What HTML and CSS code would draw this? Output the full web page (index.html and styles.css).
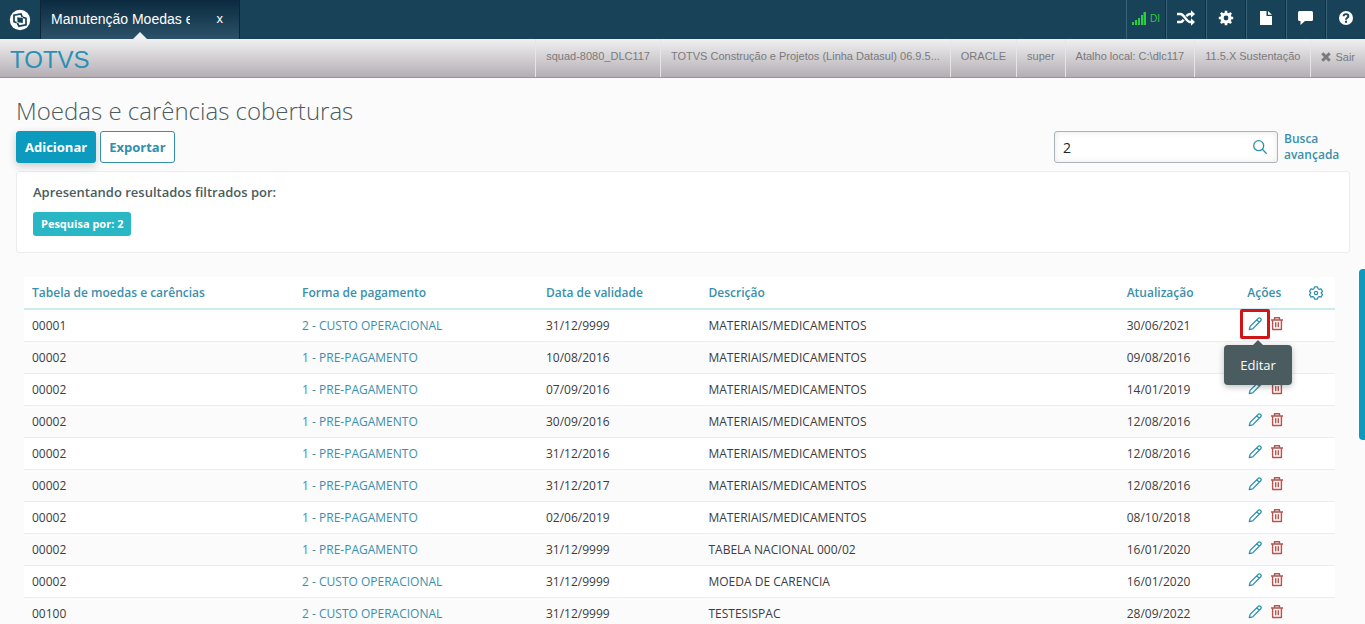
FILE: index.html
```html
<!DOCTYPE html>
<html lang="pt-BR">
<head>
<meta charset="utf-8">
<title>Moedas e carências coberturas</title>
<link rel="stylesheet" href="styles.css">
</head>
<body>
<svg class="sprite" aria-hidden="true">
  <symbol id="pencil" viewBox="0 0 16 16"><path d="M2.300 13.700l.8-3.300 8.300-8.100c.6-.6 1.400-.5 1.900 0l.5.5c.6.6.5 1.400 0 1.900l-8.200 8.200-3.300.8zM9.800 3.900l2.400 2.400" fill="none" stroke="currentColor" stroke-width="1.300" stroke-linejoin="round"/></symbol>
  <symbol id="trash" viewBox="0 0 16 16"><path d="M2 4h12M5.500 4V1.800h5V4M3.600 4v9.500h8.800V4M6.700 6.200v5M9.300 6.200v5" fill="none" stroke="currentColor" stroke-width="1.400" stroke-linejoin="round"/></symbol>
</svg>
<header class="topbar">
  <a class="logo" href="#" aria-label="Início"><svg width="22" height="22" viewBox="0 0 22 22"><circle cx="11" cy="11" r="10.200" fill="#fff"/><path d="M7.600 13.600L5 12.700V6.200l7-1.300 1.300 3.200" fill="none" stroke="#174257" stroke-width="1.700"/><path d="M13.800 8.400l3.200.9v6.500l-7 1.400-1.700-3.200" fill="none" stroke="#174257" stroke-width="1.700"/><path d="M8.200 8.200l5.600.8v5l-5.300-.8z" fill="#174257"/></svg></a>
  <div class="tab"><span class="tab-name">Manutenção Moedas e</span><button class="tab-close" aria-label="Fechar">x</button></div>
  <nav class="tools">
    <button class="tool signal" aria-label="Conexão DI"><svg width="14" height="14" viewBox="0 0 14 14"><path d="M0 11h2v3H0zM3 9h2v5H3zM6 7h2v7H6zM9 4h2v10H9zM11.500 1H14v13h-2.500z" fill="currentColor"/></svg><span>DI</span></button>
    <button class="tool" aria-label="Alternar"><svg width="18" height="16" viewBox="0 0 18 16"><path d="M0 4h3.500c3.500 0 6 8 9.500 8h2M0 12h3.500c1.300 0 2.300-1 3.200-2.300M9.300 6.200C10.300 4.900 11.500 4 13 4h2" fill="none" stroke="#fff" stroke-width="2.400"/><path d="M14 .3L18 4l-4 3.700zM14 8.300l4 3.700-4 3.700z" fill="#fff"/></svg></button>
    <button class="tool" aria-label="Configurações"><svg width="16" height="16" viewBox="0 0 16 16"><circle cx="8" cy="8" r="4" fill="none" stroke="#fff" stroke-width="3.200"/><path d="M8 .8v3M8 12.200v3M.8 8h3M12.200 8h3M2.900 2.900L5 5M11 11l2.100 2.100M2.900 13.100L5 11M11 5l2.100-2.100" stroke="#fff" stroke-width="2.600"/></svg></button>
    <button class="tool" aria-label="Documentos"><svg width="12" height="14" viewBox="0 0 12 14"><path d="M0 0h6.500v5H12v9H0zM8 0l4 3.800H8z" fill="#fff"/></svg></button>
    <button class="tool" aria-label="Mensagens"><svg width="16" height="14" viewBox="0 0 16 14"><path d="M1.500 0h12q1.500 0 1.500 1.500v7q0 1.500-1.500 1.500H7l-4.500 4V10h-1Q0 10 0 8.500v-7Q0 0 1.500 0z" fill="#fff"/></svg></button>
    <button class="tool" aria-label="Ajuda"><svg width="14" height="14" viewBox="0 0 14 14"><circle cx="7" cy="7" r="7" fill="#fff"/><path d="M4.600 5.200C4.700 2.400 9.500 2.500 9.400 5.100 9.300 6.800 7 6.600 7 8.700" fill="none" stroke="#174257" stroke-width="1.900"/><path d="M6 9.700h2v2H6z" fill="#174257"/></svg></button>
  </nav>
</header>
<div class="infobar">
  <strong class="brand">TOTVS</strong>
  <span class="info">squad-8080_DLC117</span>
  <span class="info">TOTVS Construção e Projetos (Linha Datasul) 06.9.5...</span>
  <span class="info">ORACLE</span>
  <span class="info">super</span>
  <span class="info">Atalho local: C:\dlc117</span>
  <span class="info">11.5.X Sustentação</span>
  <a class="info exit" href="#"><svg width="10" height="10" viewBox="0 0 10 10"><path d="M1.300 1.300l7.400 7.400M8.700 1.300L1.300 8.700" stroke="currentColor" stroke-width="3"/></svg>Sair</a>
</div>
<main class="page">
  <h1 class="title">Moedas e carências coberturas</h1>
  <div class="actions">
    <button class="btn primary">Adicionar</button>
    <button class="btn">Exportar</button>
    <form class="search">
      <div class="search-box"><input class="search-input" type="text" value="2" aria-label="Pesquisar"><button class="search-btn" type="button" aria-label="Buscar"><svg width="16" height="16" viewBox="0 0 16 16"><circle cx="6.700" cy="6.700" r="5" fill="none" stroke="currentColor" stroke-width="1.300"/><path d="M10.300 10.300l4.400 4.400" stroke="currentColor" stroke-width="1.300"/></svg></button></div>
      <a class="advanced" href="#">Busca avançada</a>
    </form>
  </div>
  <section class="filters">
    <h2 class="filters-title">Apresentando resultados filtrados por:</h2>
    <span class="tag">Pesquisa por: 2</span>
  </section>
  <table class="grid">
    <colgroup><col class="c-table"><col class="c-pay"><col class="c-date"><col class="c-desc"><col class="c-upd"><col class="c-act"><col class="c-cfg"></colgroup>
    <thead><tr><th>Tabela de moedas e carências</th><th>Forma de pagamento</th><th>Data de validade</th><th>Descrição</th><th>Atualização</th><th>Ações</th><th><button class="icon config" aria-label="Colunas"><svg width="14" height="14" viewBox="0 0 14 14"><path d="M5.500.8h3l.5 1.900 1.200.7 1.800-.5 1.500 2.500L12.200 7l1.300 1.600-1.500 2.500-1.800-.5-1.200.7-.5 1.900h-3L5 11.300l-1.200-.7-1.800.5L.5 8.600 1.800 7 .5 5.400 2 2.900l1.800.5L5 2.700z" fill="none" stroke="currentColor" stroke-width="1.200" stroke-linejoin="round"/><circle cx="7" cy="7" r="1.600" fill="none" stroke="currentColor" stroke-width="1.200"/></svg></button></th></tr></thead>
    <tbody>
      <tr><td>00001</td><td><a href="#">2 - CUSTO OPERACIONAL</a></td><td>31/12/9999</td><td>MATERIAIS/MEDICAMENTOS</td><td>30/06/2021</td><td><div class="row-actions"><button class="icon marked" aria-label="Editar" aria-describedby="tip"><svg width="16" height="16"><use href="#pencil"/></svg><span class="tip" id="tip" role="tooltip">Editar</span></button><button class="icon danger" aria-label="Excluir"><svg width="16" height="16"><use href="#trash"/></svg></button></div></td><td></td></tr>
      <tr><td>00002</td><td><a href="#">1 - PRE-PAGAMENTO</a></td><td>10/08/2016</td><td>MATERIAIS/MEDICAMENTOS</td><td>09/08/2016</td><td><div class="row-actions"><button class="icon" aria-label="Editar"><svg width="16" height="16"><use href="#pencil"/></svg></button><button class="icon danger" aria-label="Excluir"><svg width="16" height="16"><use href="#trash"/></svg></button></div></td><td></td></tr>
      <tr><td>00002</td><td><a href="#">1 - PRE-PAGAMENTO</a></td><td>07/09/2016</td><td>MATERIAIS/MEDICAMENTOS</td><td>14/01/2019</td><td><div class="row-actions"><button class="icon" aria-label="Editar"><svg width="16" height="16"><use href="#pencil"/></svg></button><button class="icon danger" aria-label="Excluir"><svg width="16" height="16"><use href="#trash"/></svg></button></div></td><td></td></tr>
      <tr><td>00002</td><td><a href="#">1 - PRE-PAGAMENTO</a></td><td>30/09/2016</td><td>MATERIAIS/MEDICAMENTOS</td><td>12/08/2016</td><td><div class="row-actions"><button class="icon" aria-label="Editar"><svg width="16" height="16"><use href="#pencil"/></svg></button><button class="icon danger" aria-label="Excluir"><svg width="16" height="16"><use href="#trash"/></svg></button></div></td><td></td></tr>
      <tr><td>00002</td><td><a href="#">1 - PRE-PAGAMENTO</a></td><td>31/12/2016</td><td>MATERIAIS/MEDICAMENTOS</td><td>12/08/2016</td><td><div class="row-actions"><button class="icon" aria-label="Editar"><svg width="16" height="16"><use href="#pencil"/></svg></button><button class="icon danger" aria-label="Excluir"><svg width="16" height="16"><use href="#trash"/></svg></button></div></td><td></td></tr>
      <tr><td>00002</td><td><a href="#">1 - PRE-PAGAMENTO</a></td><td>31/12/2017</td><td>MATERIAIS/MEDICAMENTOS</td><td>12/08/2016</td><td><div class="row-actions"><button class="icon" aria-label="Editar"><svg width="16" height="16"><use href="#pencil"/></svg></button><button class="icon danger" aria-label="Excluir"><svg width="16" height="16"><use href="#trash"/></svg></button></div></td><td></td></tr>
      <tr><td>00002</td><td><a href="#">1 - PRE-PAGAMENTO</a></td><td>02/06/2019</td><td>MATERIAIS/MEDICAMENTOS</td><td>08/10/2018</td><td><div class="row-actions"><button class="icon" aria-label="Editar"><svg width="16" height="16"><use href="#pencil"/></svg></button><button class="icon danger" aria-label="Excluir"><svg width="16" height="16"><use href="#trash"/></svg></button></div></td><td></td></tr>
      <tr><td>00002</td><td><a href="#">1 - PRE-PAGAMENTO</a></td><td>31/12/9999</td><td>TABELA NACIONAL 000/02</td><td>16/01/2020</td><td><div class="row-actions"><button class="icon" aria-label="Editar"><svg width="16" height="16"><use href="#pencil"/></svg></button><button class="icon danger" aria-label="Excluir"><svg width="16" height="16"><use href="#trash"/></svg></button></div></td><td></td></tr>
      <tr><td>00002</td><td><a href="#">2 - CUSTO OPERACIONAL</a></td><td>31/12/9999</td><td>MOEDA DE CARENCIA</td><td>16/01/2020</td><td><div class="row-actions"><button class="icon" aria-label="Editar"><svg width="16" height="16"><use href="#pencil"/></svg></button><button class="icon danger" aria-label="Excluir"><svg width="16" height="16"><use href="#trash"/></svg></button></div></td><td></td></tr>
      <tr><td>00100</td><td><a href="#">2 - CUSTO OPERACIONAL</a></td><td>31/12/9999</td><td>TESTESISPAC</td><td>28/09/2022</td><td><div class="row-actions"><button class="icon" aria-label="Editar"><svg width="16" height="16"><use href="#pencil"/></svg></button><button class="icon danger" aria-label="Excluir"><svg width="16" height="16"><use href="#trash"/></svg></button></div></td><td></td></tr>
    </tbody>
  </table>
</main>
<div class="scroll-thumb"></div>
</body>
</html>
```
FILE: styles.css
```css
* { box-sizing: border-box; }
body {
  margin: 0;
  height: 100vh;
  overflow: hidden;
  display: flex;
  flex-direction: column;
  background: #fbfbfb;
  color: #3c3c42;
  font-family: "Open Sans", "Noto Sans", sans-serif;
  font-size: 12px;
}
button { font: inherit; color: inherit; background: none; border: 0; padding: 0; cursor: pointer; }
a { color: #3a8fac; text-decoration: none; }
svg { display: block; }
.sprite { position: absolute; width: 0; height: 0; }

.topbar {
  display: flex;
  flex: none;
  height: 39px;
  background: #174257;
  color: #fff;
  font-family: "Liberation Sans", Arial, sans-serif;
}
.logo { width: 40px; display: grid; place-items: center; }
.tab {
  position: relative;
  display: flex;
  align-items: center;
  justify-content: space-between;
  width: 200px;
  padding: 0 16px 2px 10px;
  border: solid #0a2637;
  border-width: 0 1px;
  background: linear-gradient(#0b2a3f, #2b5269);
  font-size: 14px;
}
.tab::after {
  content: "";
  position: absolute;
  left: 92px;
  bottom: 0;
  border: 7px solid transparent;
  border-top: 0;
  border-bottom-color: #f0f0f1;
}
.tab-name { width: 139px; overflow: hidden; white-space: nowrap; }
.tab-close { font-size: 13px; }
.tools { display: flex; margin-left: auto; }
.tool {
  width: 40px;
  display: flex;
  align-items: center;
  justify-content: center;
  gap: 4px;
  padding-bottom: 3px;
  border-left: 1px solid #3b6378;
  border-right: 1px solid #0d3144;
}
.tool:last-child { width: 39px; border-right: 0; }
.signal { color: #2ecc40; font-size: 10px; }

.infobar {
  display: flex;
  flex: none;
  height: 39px;
  background: linear-gradient(#f0f0f1, #b4aeb4);
  border-bottom: 1px solid #96929a;
  font-family: "Liberation Sans", Arial, sans-serif;
}
.brand { margin-right: auto; padding-left: 10px; font-size: 24px; line-height: 42px; font-weight: 400; color: #2b90b5; }
.info { padding: 0 10px; border-left: 1px solid #e6e4e7; font-size: 11px; line-height: 34px; color: #7a7a7d; }
.exit { display: flex; align-items: center; gap: 4px; padding-bottom: 2px; }

.page { padding: 16px 15px 0 16px; }
.title { margin: 0; font-size: 24px; line-height: 33px; font-weight: 300; color: #4a5c60; }
.actions { display: flex; align-items: center; gap: 4px; margin-top: 4px; }
.btn {
  height: 32px;
  padding: 0 8px;
  border: 1px solid #3391ae;
  border-radius: 3px;
  background: #fff;
  color: #2f8fae;
  font-size: 13px;
  font-weight: 700;
}
.primary { background: #0c9abe; border-color: #0c9abe; color: #fff; font-weight: 700; box-shadow: 0 3px 8px rgba(0, 0, 0, .2); }
.search { display: flex; align-items: center; gap: 6px; margin-left: auto; }
.search-box {
  display: flex;
  align-items: center;
  width: 224px;
  height: 32px;
  padding: 0 9px 0 8px;
  border: 1px solid #adb4b7;
  border-radius: 3px;
  background: #fff;
  box-shadow: inset 0 0 6px #e7e7e7;
}
.search-input { flex: 1; min-width: 0; border: 0; padding: 0; outline: 0; background: none; font: inherit; font-size: 14px; color: #222; }
.search-btn { color: #2f8fae; }
.advanced { width: 66px; line-height: 16px; font-weight: 600; }
.filters {
  margin-top: 8px;
  padding: 8px 16px 16px;
  border: 1px solid #ececec;
  border-radius: 3px;
  background: #fff;
}
.filters-title { margin: 0 0 8px; font-size: 13px; line-height: 24px; font-weight: 600; color: #4a5c60; }
.tag {
  display: inline-block;
  padding: 0 8px;
  border-radius: 3px;
  background: #29b6c5;
  color: #fff;
  font-size: 11px;
  line-height: 24px;
  font-weight: 700;
}

.grid {
  width: calc(100% - 23px);
  margin: 24px 15px 0 8px;
  border-collapse: separate;
  border-spacing: 0;
  table-layout: fixed;
}
.c-table { width: 20.6%; }
.c-pay { width: 18.6%; }
.c-date { width: 12.4%; }
.c-desc { width: 31.9%; }
.c-upd { width: 9.2%; }
.c-act { width: 4.7%; }
.c-cfg { width: 2.6%; }
.grid th { height: 33px; padding: 0 8px; background: #fff; border-bottom: 2px solid #cdeaee; text-align: left; font-weight: 600; color: #3a8fac; white-space: nowrap; }
.grid td { height: 32px; padding: 0 8px; border-bottom: 1px solid #ececec; white-space: nowrap; }
.grid tr:nth-child(odd) td { background: #fff; }
.row-actions { display: flex; gap: 6px; padding-bottom: 3px; }
.icon { color: #2f8fae; }
.config { display: block; }
.danger { color: #b9534c; }
.marked { position: relative; }
.marked::before { content: ""; position: absolute; inset: -7px; border: 3px solid #cf1518; border-radius: 2px; }
.tip {
  position: absolute;
  z-index: 1;
  top: 29px;
  left: -23px;
  padding: 0 16px;
  border-radius: 4px;
  background: #4a5c60;
  color: #fff;
  font-size: 13px;
  line-height: 40px;
  box-shadow: 0 2px 6px rgba(0, 0, 0, .25);
}
.tip::before {
  content: "";
  position: absolute;
  left: 50%;
  top: -5px;
  margin-left: -5px;
  border: 5px solid transparent;
  border-top: 0;
  border-bottom-color: #4a5c60;
}
.scroll-thumb { position: fixed; right: 0; top: 269px; width: 6px; height: 171px; border-radius: 4px 0 0 4px; background: #0c9abe; }
```
